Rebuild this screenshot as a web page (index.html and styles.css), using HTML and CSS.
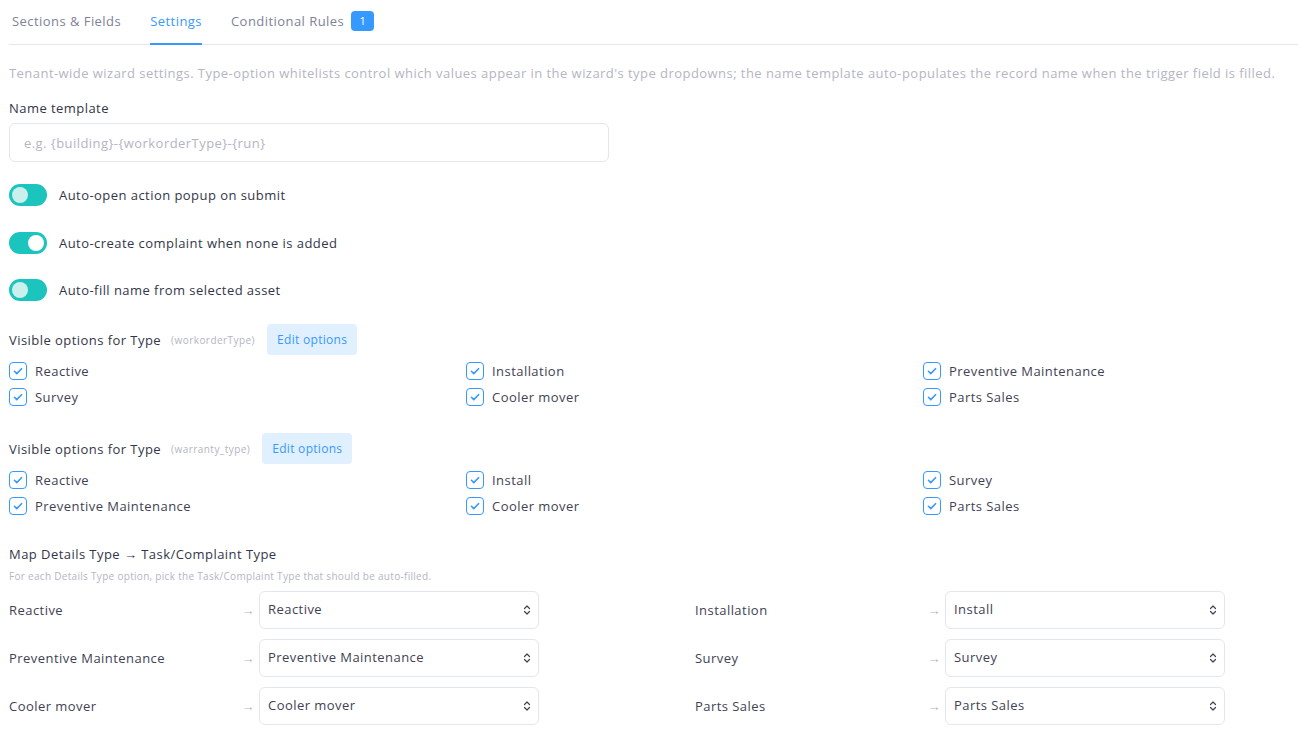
FILE: index.html
```html
<!DOCTYPE html>
<html lang="en">
<head>
<meta charset="utf-8">
<title>Wizard settings</title>
<link rel="stylesheet" href="styles.css">
</head>
<body>
<div class="page">
  <nav class="tabs">
    <a class="tab">Sections &amp; Fields</a>
    <a class="tab active">Settings</a>
    <a class="tab">Conditional Rules <span class="badge">1</span></a>
  </nav>

  <p class="intro">Tenant-wide wizard settings. Type-option whitelists control which values appear in the wizard's type dropdowns; the name template auto-populates the record name when the trigger field is filled.</p>

  <label class="field-label">Name template</label>
  <div class="input">e.g. {building}-{workorderType}-{run}</div>

  <div class="toggles">
    <div class="toggle-row"><span class="switch half"><span class="knob"></span></span><span class="toggle-label">Auto-open action popup on submit</span></div>
    <div class="toggle-row"><span class="switch on"><span class="knob"></span></span><span class="toggle-label">Auto-create complaint when none is added</span></div>
    <div class="toggle-row"><span class="switch half"><span class="knob"></span></span><span class="toggle-label">Auto-fill name from selected asset</span></div>
  </div>

  <section class="options">
    <div class="options-head">
      <span class="section-title">Visible options for Type</span>
      <span class="field-key">(workorderType)</span>
      <button class="edit-btn">Edit options</button>
    </div>
    <div class="check-grid">
      <div class="check"><span class="box"><svg viewBox="0 0 18 18"><path d="M5 9.3l2.6 2.6L13 6.4"/></svg></span>Reactive</div>
      <div class="check"><span class="box"><svg viewBox="0 0 18 18"><path d="M5 9.3l2.6 2.6L13 6.4"/></svg></span>Installation</div>
      <div class="check"><span class="box"><svg viewBox="0 0 18 18"><path d="M5 9.3l2.6 2.6L13 6.4"/></svg></span>Preventive Maintenance</div>
      <div class="check"><span class="box"><svg viewBox="0 0 18 18"><path d="M5 9.3l2.6 2.6L13 6.4"/></svg></span>Survey</div>
      <div class="check"><span class="box"><svg viewBox="0 0 18 18"><path d="M5 9.3l2.6 2.6L13 6.4"/></svg></span>Cooler mover</div>
      <div class="check"><span class="box"><svg viewBox="0 0 18 18"><path d="M5 9.3l2.6 2.6L13 6.4"/></svg></span>Parts Sales</div>
    </div>
  </section>

  <section class="options">
    <div class="options-head">
      <span class="section-title">Visible options for Type</span>
      <span class="field-key">(warranty_type)</span>
      <button class="edit-btn">Edit options</button>
    </div>
    <div class="check-grid">
      <div class="check"><span class="box"><svg viewBox="0 0 18 18"><path d="M5 9.3l2.6 2.6L13 6.4"/></svg></span>Reactive</div>
      <div class="check"><span class="box"><svg viewBox="0 0 18 18"><path d="M5 9.3l2.6 2.6L13 6.4"/></svg></span>Install</div>
      <div class="check"><span class="box"><svg viewBox="0 0 18 18"><path d="M5 9.3l2.6 2.6L13 6.4"/></svg></span>Survey</div>
      <div class="check"><span class="box"><svg viewBox="0 0 18 18"><path d="M5 9.3l2.6 2.6L13 6.4"/></svg></span>Preventive Maintenance</div>
      <div class="check"><span class="box"><svg viewBox="0 0 18 18"><path d="M5 9.3l2.6 2.6L13 6.4"/></svg></span>Cooler mover</div>
      <div class="check"><span class="box"><svg viewBox="0 0 18 18"><path d="M5 9.3l2.6 2.6L13 6.4"/></svg></span>Parts Sales</div>
    </div>
  </section>

  <section class="mapping">
    <div class="section-title">Map Details Type → Task/Complaint Type</div>
    <div class="hint">For each Details Type option, pick the Task/Complaint Type that should be auto-filled.</div>
    <div class="map-grid">
      <div class="map-row"><span class="map-label">Reactive</span><span class="arrow">→</span><div class="select">Reactive<svg viewBox="0 0 8 12"><path d="M1.5 4.5L4 2l2.5 2.5M1.5 7.5L4 10l2.5-2.5"/></svg></div></div>
      <div class="map-row"><span class="map-label">Installation</span><span class="arrow">→</span><div class="select">Install<svg viewBox="0 0 8 12"><path d="M1.5 4.5L4 2l2.5 2.5M1.5 7.5L4 10l2.5-2.5"/></svg></div></div>
      <div class="map-row"><span class="map-label">Preventive Maintenance</span><span class="arrow">→</span><div class="select">Preventive Maintenance<svg viewBox="0 0 8 12"><path d="M1.5 4.5L4 2l2.5 2.5M1.5 7.5L4 10l2.5-2.5"/></svg></div></div>
      <div class="map-row"><span class="map-label">Survey</span><span class="arrow">→</span><div class="select">Survey<svg viewBox="0 0 8 12"><path d="M1.5 4.5L4 2l2.5 2.5M1.5 7.5L4 10l2.5-2.5"/></svg></div></div>
      <div class="map-row"><span class="map-label">Cooler mover</span><span class="arrow">→</span><div class="select">Cooler mover<svg viewBox="0 0 8 12"><path d="M1.5 4.5L4 2l2.5 2.5M1.5 7.5L4 10l2.5-2.5"/></svg></div></div>
      <div class="map-row"><span class="map-label">Parts Sales</span><span class="arrow">→</span><div class="select">Parts Sales<svg viewBox="0 0 8 12"><path d="M1.5 4.5L4 2l2.5 2.5M1.5 7.5L4 10l2.5-2.5"/></svg></div></div>
    </div>
  </section>
</div>
</body>
</html>
```

FILE: styles.css
```css
* { box-sizing: border-box; }

html, body {
  margin: 0;
  background: #ffffff;
}

body {
  font-family: "Open Sans", "Noto Sans", sans-serif;
  font-size: 13px;
  letter-spacing: 0.45px;
  color: #3f4254;
  overflow: hidden;
}

.page {
  padding: 0 0 0 9px;
}

/* tab strip */
.tabs {
  display: flex;
  align-items: flex-end;
  border-bottom: 1px solid #e4e6ef;
  height: 45px;
  padding-left: 3px;
}

.tab {
  display: flex;
  align-items: center;
  height: 44px;
  margin-right: 29px;
  color: #7e8299;
  font-size: 13px;
  border-bottom: 2px solid transparent;
  margin-bottom: -1px;
  padding-bottom: 3px;
}

.tab.active {
  color: #3699ff;
  border-bottom-color: #3699ff;
}

.badge {
  display: inline-flex;
  align-items: center;
  justify-content: center;
  width: 23px;
  height: 20px;
  margin-left: 7px;
  border-radius: 4px;
  background: #3699ff;
  color: #fff;
  font-size: 11px;
  letter-spacing: 0;
}

.intro {
  margin: 18px 0 0;
  line-height: 20px;
  color: #b5b5c3;
  font-size: 13px;
  white-space: nowrap;
}

.field-label {
  display: block;
  margin-top: 15px;
  line-height: 20px;
  font-weight: 500;
  color: #33364a;
}

.input {
  width: 600px;
  height: 39px;
  margin-top: 5px;
  border: 1px solid #e4e6ef;
  border-radius: 6px;
  padding: 0 14px;
  display: flex;
  align-items: center;
  color: #b5b5c3;
}

/* switches */
.toggles {
  margin-top: 22px;
  display: flex;
  flex-direction: column;
  gap: 25.5px;
}

.toggle-row {
  display: flex;
  align-items: center;
  gap: 12px;
  height: 22px;
}

.toggle-label {
  font-weight: 500;
  color: #33364a;
}

.switch {
  position: relative;
  width: 38px;
  height: 22px;
  border-radius: 11px;
  background: #1bc5bd;
  flex: none;
}

.knob {
  position: absolute;
  top: 3px;
  width: 16px;
  height: 16px;
  border-radius: 50%;
}

.switch.half .knob {
  left: 3px;
  background: #c9f0ec;
}

.switch.on .knob {
  right: 3px;
  background: #ffffff;
}

/* type whitelists */
.options {
  margin-top: 23px;
}

.options + .options {
  margin-top: 27px;
}

.options-head {
  display: flex;
  align-items: center;
  height: 31px;
}

.section-title {
  font-weight: 500;
  color: #33364a;
  font-size: 13px;
}

.field-key {
  margin-left: 10px;
  font-size: 10px;
  color: #b5b5c3;
}

.edit-btn {
  margin-left: 12px;
  height: 31px;
  padding: 0 10px;
  border: 0;
  border-radius: 4px;
  background: #e1f0ff;
  color: #3699ff;
  font-family: inherit;
  font-size: 12px;
  letter-spacing: 0.3px;
}

.check-grid {
  display: grid;
  grid-template-columns: repeat(3, 375px);
  column-gap: 82px;
  row-gap: 8px;
  margin-top: 7px;
}

.check {
  display: flex;
  align-items: center;
  gap: 8px;
  height: 18px;
  color: #3f4254;
}

.box {
  width: 18px;
  height: 18px;
  border: 1.5px solid #3699ff;
  border-radius: 4px;
  display: flex;
  flex: none;
}

.box svg {
  width: 100%;
  height: 100%;
  fill: none;
  stroke: #3699ff;
  stroke-width: 1.8;
  stroke-linecap: round;
  stroke-linejoin: round;
}

/* details-to-complaint mapping */
.mapping {
  margin-top: 29px;
}

.mapping .section-title {
  line-height: 20px;
}

.hint {
  margin-top: 5px;
  font-size: 10px;
  color: #b5b5c3;
  line-height: 14px;
  letter-spacing: 0.3px;
}

.map-grid {
  display: grid;
  grid-template-columns: 603px 603px;
  column-gap: 83px;
  row-gap: 10px;
  margin-top: 8px;
}

.map-row {
  display: flex;
  align-items: center;
  height: 38px;
}

.map-label {
  width: 228px;
}

.arrow {
  width: 22px;
  text-align: center;
  color: #b5b5c3;
  font-size: 13px;
  letter-spacing: 0;
}

.select {
  width: 280px;
  height: 38px;
  border: 1px solid #e4e6ef;
  border-radius: 6px;
  padding: 0 7px 2px 8px;
  display: flex;
  align-items: center;
  justify-content: space-between;
  color: #3f4254;
}

.select svg {
  width: 8px;
  height: 12px;
  margin-top: 2px;
  fill: none;
  stroke: #3f4254;
  stroke-width: 1.2;
  stroke-linecap: round;
  stroke-linejoin: round;
}
```
